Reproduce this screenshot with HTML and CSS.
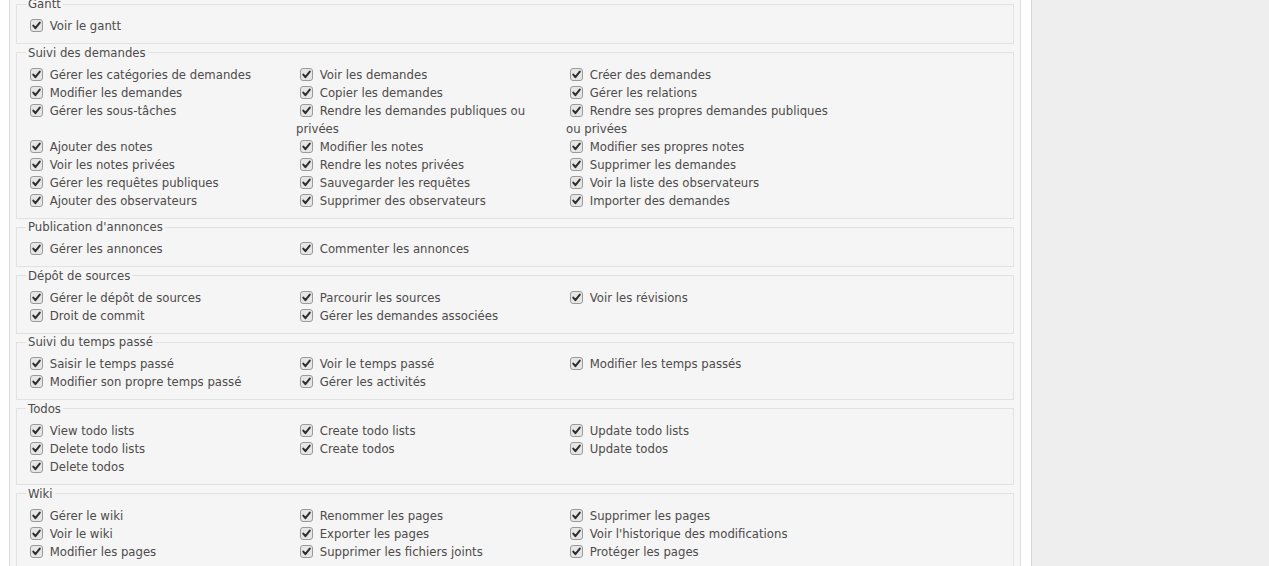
FILE: index.html
```html
<!DOCTYPE html>
<html lang="fr">
<head>
<meta charset="utf-8">
<title>Permissions</title>
<link rel="stylesheet" href="styles.css">
</head>
<body>
<div class="page">
  <div class="content-col">
    <div class="content">

      <fieldset class="box first">
        <legend>Gantt</legend>
        <div class="perms">
          <label><span class="cb"><svg viewBox="0 0 13 13" width="13" height="13"><rect x="0.5" y="0.5" width="12" height="12" rx="2.5" class="cb-box"/><path d="M3.3 6.6 L5.4 9.2 L9.8 3.6" class="cb-check"/></svg></span> Voir le gantt</label>
        </div>
      </fieldset>

      <fieldset class="box">
        <legend>Suivi des demandes</legend>
        <div class="perms">
          <label><span class="cb"><svg viewBox="0 0 13 13" width="13" height="13"><rect x="0.5" y="0.5" width="12" height="12" rx="2.5" class="cb-box"/><path d="M3.3 6.6 L5.4 9.2 L9.8 3.6" class="cb-check"/></svg></span> Gérer les catégories de demandes</label>
          <label><span class="cb"><svg viewBox="0 0 13 13" width="13" height="13"><rect x="0.5" y="0.5" width="12" height="12" rx="2.5" class="cb-box"/><path d="M3.3 6.6 L5.4 9.2 L9.8 3.6" class="cb-check"/></svg></span> Voir les demandes</label>
          <label><span class="cb"><svg viewBox="0 0 13 13" width="13" height="13"><rect x="0.5" y="0.5" width="12" height="12" rx="2.5" class="cb-box"/><path d="M3.3 6.6 L5.4 9.2 L9.8 3.6" class="cb-check"/></svg></span> Créer des demandes</label>
          <label><span class="cb"><svg viewBox="0 0 13 13" width="13" height="13"><rect x="0.5" y="0.5" width="12" height="12" rx="2.5" class="cb-box"/><path d="M3.3 6.6 L5.4 9.2 L9.8 3.6" class="cb-check"/></svg></span> Modifier les demandes</label>
          <label><span class="cb"><svg viewBox="0 0 13 13" width="13" height="13"><rect x="0.5" y="0.5" width="12" height="12" rx="2.5" class="cb-box"/><path d="M3.3 6.6 L5.4 9.2 L9.8 3.6" class="cb-check"/></svg></span> Copier les demandes</label>
          <label><span class="cb"><svg viewBox="0 0 13 13" width="13" height="13"><rect x="0.5" y="0.5" width="12" height="12" rx="2.5" class="cb-box"/><path d="M3.3 6.6 L5.4 9.2 L9.8 3.6" class="cb-check"/></svg></span> Gérer les relations</label>
          <label><span class="cb"><svg viewBox="0 0 13 13" width="13" height="13"><rect x="0.5" y="0.5" width="12" height="12" rx="2.5" class="cb-box"/><path d="M3.3 6.6 L5.4 9.2 L9.8 3.6" class="cb-check"/></svg></span> Gérer les sous-tâches</label>
          <label><span class="cb"><svg viewBox="0 0 13 13" width="13" height="13"><rect x="0.5" y="0.5" width="12" height="12" rx="2.5" class="cb-box"/><path d="M3.3 6.6 L5.4 9.2 L9.8 3.6" class="cb-check"/></svg></span> Rendre les demandes publiques ou privées</label>
          <label><span class="cb"><svg viewBox="0 0 13 13" width="13" height="13"><rect x="0.5" y="0.5" width="12" height="12" rx="2.5" class="cb-box"/><path d="M3.3 6.6 L5.4 9.2 L9.8 3.6" class="cb-check"/></svg></span> Rendre ses propres demandes publiques ou privées</label>
          <label><span class="cb"><svg viewBox="0 0 13 13" width="13" height="13"><rect x="0.5" y="0.5" width="12" height="12" rx="2.5" class="cb-box"/><path d="M3.3 6.6 L5.4 9.2 L9.8 3.6" class="cb-check"/></svg></span> Ajouter des notes</label>
          <label><span class="cb"><svg viewBox="0 0 13 13" width="13" height="13"><rect x="0.5" y="0.5" width="12" height="12" rx="2.5" class="cb-box"/><path d="M3.3 6.6 L5.4 9.2 L9.8 3.6" class="cb-check"/></svg></span> Modifier les notes</label>
          <label><span class="cb"><svg viewBox="0 0 13 13" width="13" height="13"><rect x="0.5" y="0.5" width="12" height="12" rx="2.5" class="cb-box"/><path d="M3.3 6.6 L5.4 9.2 L9.8 3.6" class="cb-check"/></svg></span> Modifier ses propres notes</label>
          <label><span class="cb"><svg viewBox="0 0 13 13" width="13" height="13"><rect x="0.5" y="0.5" width="12" height="12" rx="2.5" class="cb-box"/><path d="M3.3 6.6 L5.4 9.2 L9.8 3.6" class="cb-check"/></svg></span> Voir les notes privées</label>
          <label><span class="cb"><svg viewBox="0 0 13 13" width="13" height="13"><rect x="0.5" y="0.5" width="12" height="12" rx="2.5" class="cb-box"/><path d="M3.3 6.6 L5.4 9.2 L9.8 3.6" class="cb-check"/></svg></span> Rendre les notes privées</label>
          <label><span class="cb"><svg viewBox="0 0 13 13" width="13" height="13"><rect x="0.5" y="0.5" width="12" height="12" rx="2.5" class="cb-box"/><path d="M3.3 6.6 L5.4 9.2 L9.8 3.6" class="cb-check"/></svg></span> Supprimer les demandes</label>
          <label><span class="cb"><svg viewBox="0 0 13 13" width="13" height="13"><rect x="0.5" y="0.5" width="12" height="12" rx="2.5" class="cb-box"/><path d="M3.3 6.6 L5.4 9.2 L9.8 3.6" class="cb-check"/></svg></span> Gérer les requêtes publiques</label>
          <label><span class="cb"><svg viewBox="0 0 13 13" width="13" height="13"><rect x="0.5" y="0.5" width="12" height="12" rx="2.5" class="cb-box"/><path d="M3.3 6.6 L5.4 9.2 L9.8 3.6" class="cb-check"/></svg></span> Sauvegarder les requêtes</label>
          <label><span class="cb"><svg viewBox="0 0 13 13" width="13" height="13"><rect x="0.5" y="0.5" width="12" height="12" rx="2.5" class="cb-box"/><path d="M3.3 6.6 L5.4 9.2 L9.8 3.6" class="cb-check"/></svg></span> Voir la liste des observateurs</label>
          <label><span class="cb"><svg viewBox="0 0 13 13" width="13" height="13"><rect x="0.5" y="0.5" width="12" height="12" rx="2.5" class="cb-box"/><path d="M3.3 6.6 L5.4 9.2 L9.8 3.6" class="cb-check"/></svg></span> Ajouter des observateurs</label>
          <label><span class="cb"><svg viewBox="0 0 13 13" width="13" height="13"><rect x="0.5" y="0.5" width="12" height="12" rx="2.5" class="cb-box"/><path d="M3.3 6.6 L5.4 9.2 L9.8 3.6" class="cb-check"/></svg></span> Supprimer des observateurs</label>
          <label><span class="cb"><svg viewBox="0 0 13 13" width="13" height="13"><rect x="0.5" y="0.5" width="12" height="12" rx="2.5" class="cb-box"/><path d="M3.3 6.6 L5.4 9.2 L9.8 3.6" class="cb-check"/></svg></span> Importer des demandes</label>
        </div>
      </fieldset>

      <fieldset class="box">
        <legend>Publication d'annonces</legend>
        <div class="perms">
          <label><span class="cb"><svg viewBox="0 0 13 13" width="13" height="13"><rect x="0.5" y="0.5" width="12" height="12" rx="2.5" class="cb-box"/><path d="M3.3 6.6 L5.4 9.2 L9.8 3.6" class="cb-check"/></svg></span> Gérer les annonces</label>
          <label><span class="cb"><svg viewBox="0 0 13 13" width="13" height="13"><rect x="0.5" y="0.5" width="12" height="12" rx="2.5" class="cb-box"/><path d="M3.3 6.6 L5.4 9.2 L9.8 3.6" class="cb-check"/></svg></span> Commenter les annonces</label>
        </div>
      </fieldset>

      <fieldset class="box">
        <legend>Dépôt de sources</legend>
        <div class="perms">
          <label><span class="cb"><svg viewBox="0 0 13 13" width="13" height="13"><rect x="0.5" y="0.5" width="12" height="12" rx="2.5" class="cb-box"/><path d="M3.3 6.6 L5.4 9.2 L9.8 3.6" class="cb-check"/></svg></span> Gérer le dépôt de sources</label>
          <label><span class="cb"><svg viewBox="0 0 13 13" width="13" height="13"><rect x="0.5" y="0.5" width="12" height="12" rx="2.5" class="cb-box"/><path d="M3.3 6.6 L5.4 9.2 L9.8 3.6" class="cb-check"/></svg></span> Parcourir les sources</label>
          <label><span class="cb"><svg viewBox="0 0 13 13" width="13" height="13"><rect x="0.5" y="0.5" width="12" height="12" rx="2.5" class="cb-box"/><path d="M3.3 6.6 L5.4 9.2 L9.8 3.6" class="cb-check"/></svg></span> Voir les révisions</label>
          <label><span class="cb"><svg viewBox="0 0 13 13" width="13" height="13"><rect x="0.5" y="0.5" width="12" height="12" rx="2.5" class="cb-box"/><path d="M3.3 6.6 L5.4 9.2 L9.8 3.6" class="cb-check"/></svg></span> Droit de commit</label>
          <label><span class="cb"><svg viewBox="0 0 13 13" width="13" height="13"><rect x="0.5" y="0.5" width="12" height="12" rx="2.5" class="cb-box"/><path d="M3.3 6.6 L5.4 9.2 L9.8 3.6" class="cb-check"/></svg></span> Gérer les demandes associées</label>
        </div>
      </fieldset>

      <fieldset class="box">
        <legend>Suivi du temps passé</legend>
        <div class="perms">
          <label><span class="cb"><svg viewBox="0 0 13 13" width="13" height="13"><rect x="0.5" y="0.5" width="12" height="12" rx="2.5" class="cb-box"/><path d="M3.3 6.6 L5.4 9.2 L9.8 3.6" class="cb-check"/></svg></span> Saisir le temps passé</label>
          <label><span class="cb"><svg viewBox="0 0 13 13" width="13" height="13"><rect x="0.5" y="0.5" width="12" height="12" rx="2.5" class="cb-box"/><path d="M3.3 6.6 L5.4 9.2 L9.8 3.6" class="cb-check"/></svg></span> Voir le temps passé</label>
          <label><span class="cb"><svg viewBox="0 0 13 13" width="13" height="13"><rect x="0.5" y="0.5" width="12" height="12" rx="2.5" class="cb-box"/><path d="M3.3 6.6 L5.4 9.2 L9.8 3.6" class="cb-check"/></svg></span> Modifier les temps passés</label>
          <label><span class="cb"><svg viewBox="0 0 13 13" width="13" height="13"><rect x="0.5" y="0.5" width="12" height="12" rx="2.5" class="cb-box"/><path d="M3.3 6.6 L5.4 9.2 L9.8 3.6" class="cb-check"/></svg></span> Modifier son propre temps passé</label>
          <label><span class="cb"><svg viewBox="0 0 13 13" width="13" height="13"><rect x="0.5" y="0.5" width="12" height="12" rx="2.5" class="cb-box"/><path d="M3.3 6.6 L5.4 9.2 L9.8 3.6" class="cb-check"/></svg></span> Gérer les activités</label>
        </div>
      </fieldset>

      <fieldset class="box">
        <legend>Todos</legend>
        <div class="perms">
          <label><span class="cb"><svg viewBox="0 0 13 13" width="13" height="13"><rect x="0.5" y="0.5" width="12" height="12" rx="2.5" class="cb-box"/><path d="M3.3 6.6 L5.4 9.2 L9.8 3.6" class="cb-check"/></svg></span> View todo lists</label>
          <label><span class="cb"><svg viewBox="0 0 13 13" width="13" height="13"><rect x="0.5" y="0.5" width="12" height="12" rx="2.5" class="cb-box"/><path d="M3.3 6.6 L5.4 9.2 L9.8 3.6" class="cb-check"/></svg></span> Create todo lists</label>
          <label><span class="cb"><svg viewBox="0 0 13 13" width="13" height="13"><rect x="0.5" y="0.5" width="12" height="12" rx="2.5" class="cb-box"/><path d="M3.3 6.6 L5.4 9.2 L9.8 3.6" class="cb-check"/></svg></span> Update todo lists</label>
          <label><span class="cb"><svg viewBox="0 0 13 13" width="13" height="13"><rect x="0.5" y="0.5" width="12" height="12" rx="2.5" class="cb-box"/><path d="M3.3 6.6 L5.4 9.2 L9.8 3.6" class="cb-check"/></svg></span> Delete todo lists</label>
          <label><span class="cb"><svg viewBox="0 0 13 13" width="13" height="13"><rect x="0.5" y="0.5" width="12" height="12" rx="2.5" class="cb-box"/><path d="M3.3 6.6 L5.4 9.2 L9.8 3.6" class="cb-check"/></svg></span> Create todos</label>
          <label><span class="cb"><svg viewBox="0 0 13 13" width="13" height="13"><rect x="0.5" y="0.5" width="12" height="12" rx="2.5" class="cb-box"/><path d="M3.3 6.6 L5.4 9.2 L9.8 3.6" class="cb-check"/></svg></span> Update todos</label>
          <label><span class="cb"><svg viewBox="0 0 13 13" width="13" height="13"><rect x="0.5" y="0.5" width="12" height="12" rx="2.5" class="cb-box"/><path d="M3.3 6.6 L5.4 9.2 L9.8 3.6" class="cb-check"/></svg></span> Delete todos</label>
        </div>
      </fieldset>

      <fieldset class="box">
        <legend>Wiki</legend>
        <div class="perms">
          <label><span class="cb"><svg viewBox="0 0 13 13" width="13" height="13"><rect x="0.5" y="0.5" width="12" height="12" rx="2.5" class="cb-box"/><path d="M3.3 6.6 L5.4 9.2 L9.8 3.6" class="cb-check"/></svg></span> Gérer le wiki</label>
          <label><span class="cb"><svg viewBox="0 0 13 13" width="13" height="13"><rect x="0.5" y="0.5" width="12" height="12" rx="2.5" class="cb-box"/><path d="M3.3 6.6 L5.4 9.2 L9.8 3.6" class="cb-check"/></svg></span> Renommer les pages</label>
          <label><span class="cb"><svg viewBox="0 0 13 13" width="13" height="13"><rect x="0.5" y="0.5" width="12" height="12" rx="2.5" class="cb-box"/><path d="M3.3 6.6 L5.4 9.2 L9.8 3.6" class="cb-check"/></svg></span> Supprimer les pages</label>
          <label><span class="cb"><svg viewBox="0 0 13 13" width="13" height="13"><rect x="0.5" y="0.5" width="12" height="12" rx="2.5" class="cb-box"/><path d="M3.3 6.6 L5.4 9.2 L9.8 3.6" class="cb-check"/></svg></span> Voir le wiki</label>
          <label><span class="cb"><svg viewBox="0 0 13 13" width="13" height="13"><rect x="0.5" y="0.5" width="12" height="12" rx="2.5" class="cb-box"/><path d="M3.3 6.6 L5.4 9.2 L9.8 3.6" class="cb-check"/></svg></span> Exporter les pages</label>
          <label><span class="cb"><svg viewBox="0 0 13 13" width="13" height="13"><rect x="0.5" y="0.5" width="12" height="12" rx="2.5" class="cb-box"/><path d="M3.3 6.6 L5.4 9.2 L9.8 3.6" class="cb-check"/></svg></span> Voir l'historique des modifications</label>
          <label><span class="cb"><svg viewBox="0 0 13 13" width="13" height="13"><rect x="0.5" y="0.5" width="12" height="12" rx="2.5" class="cb-box"/><path d="M3.3 6.6 L5.4 9.2 L9.8 3.6" class="cb-check"/></svg></span> Modifier les pages</label>
          <label><span class="cb"><svg viewBox="0 0 13 13" width="13" height="13"><rect x="0.5" y="0.5" width="12" height="12" rx="2.5" class="cb-box"/><path d="M3.3 6.6 L5.4 9.2 L9.8 3.6" class="cb-check"/></svg></span> Supprimer les fichiers joints</label>
          <label><span class="cb"><svg viewBox="0 0 13 13" width="13" height="13"><rect x="0.5" y="0.5" width="12" height="12" rx="2.5" class="cb-box"/><path d="M3.3 6.6 L5.4 9.2 L9.8 3.6" class="cb-check"/></svg></span> Protéger les pages</label>
        </div>
      </fieldset>

    </div>
  </div>
  <div class="sidebar"></div>
</div>
</body>
</html>
```

FILE: styles.css
```css
html, body {
  margin: 0;
  padding: 0;
  background: #ffffff;
}

body {
  font-family: "DejaVu Sans", Verdana, sans-serif;
  font-size: 11.7px;
  color: #4d4b4b;
}

.page {
  display: flex;
  height: 566px;
  overflow: hidden;
}

.content-col {
  width: 1031px;
  flex: none;
  box-sizing: border-box;
  padding: 0 10px 0 9px;
  display: flex;
}

.content {
  flex: 1;
  background: #f6f6f6;
  border-left: 1px solid #dcdcdc;
  border-right: 1px solid #dcdcdc;
  overflow: hidden;
}

.sidebar {
  flex: 1;
  background: #eeeeee;
  border-left: 1px solid #d6d6d6;
}

.box {
  margin: 0 6px 1.6px 6px;
  padding: 6px 9px 8px 9px;
  border: 1px solid #e2e2e2;
  background: #f5f5f5;
  min-width: 0;
}

.box.first {
  margin-top: -3px;
}

.box legend {
  padding: 0 2px;
  line-height: 14px;
  color: #4d4b4b;
}

.perms {
  display: grid;
  grid-template-columns: repeat(3, 270px);
}

.perms label {
  display: block;
  line-height: 18px;
}

.cb {
  display: inline-block;
  width: 13px;
  height: 13px;
  margin: 0 3px 0 4px;
  vertical-align: -2px;
}

.cb svg {
  display: block;
}

.cb-box {
  fill: #e6e6e6;
  stroke: #9a9a9a;
  stroke-width: 1;
}

.cb-check {
  fill: none;
  stroke: #2e2e2e;
  stroke-width: 2;
  stroke-linecap: round;
  stroke-linejoin: round;
}
```
